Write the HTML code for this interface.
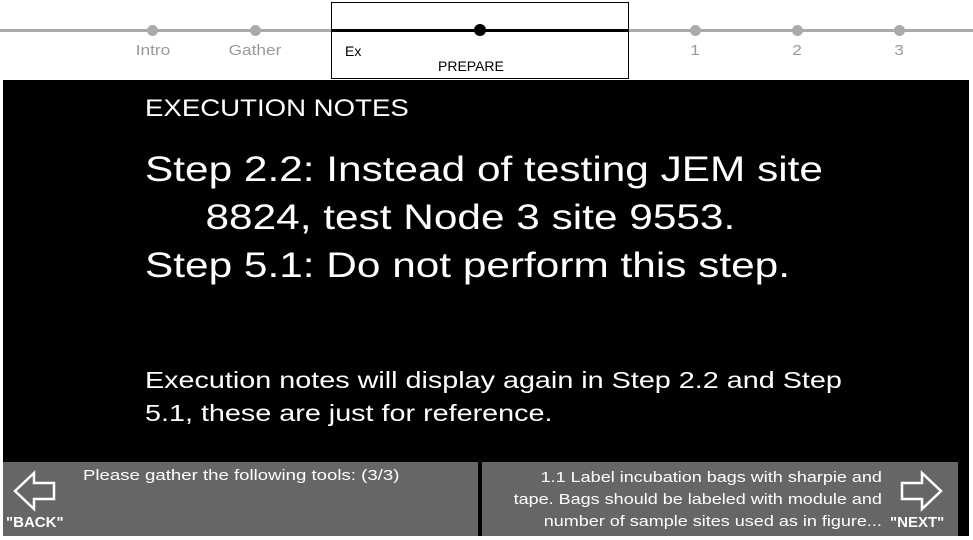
<!DOCTYPE html>
<html><head><meta charset="utf-8"><style>
body{margin:0;width:973px;height:540px;background:#fff;position:relative;overflow:hidden;font-family:"Liberation Sans",sans-serif}
.a{position:absolute}
.line{left:0;top:29px;width:973px;height:3px;background:#aaa}
.dot{width:11px;height:11px;border-radius:50%;background:#aaa;top:25px}
.lbl{color:#999;font-size:15px;top:42px;transform:translateX(-50%) scaleX(1.15)}
.main{left:3px;top:80px;width:966px;height:456px;background:#000}
.w{color:#fff;white-space:nowrap}
.s{transform-origin:0 0}
.bar{background:#666;top:462px;height:74px}
</style></head><body>
<div class="a line"></div>
<div class="a dot" style="left:147px"></div>
<div class="a dot" style="left:250px"></div>
<div class="a dot" style="left:690px"></div>
<div class="a dot" style="left:792px"></div>
<div class="a dot" style="left:894px"></div>
<div class="a lbl" style="left:153px">Intro</div>
<div class="a lbl" style="left:255px">Gather</div>
<div class="a lbl" style="left:695px">1</div>
<div class="a lbl" style="left:797px">2</div>
<div class="a lbl" style="left:899px">3</div>
<div class="a" style="left:331px;top:2px;width:296px;height:75px;border:1.5px solid #000;background:#fff"></div>
<div class="a" style="left:331px;top:29px;width:298px;height:3px;background:#000"></div>
<div class="a" style="left:474px;top:24px;width:12px;height:12px;border-radius:50%;background:#000"></div>
<div class="a" style="left:345px;top:43px;font-size:14px">Ex</div>
<div class="a" style="left:438px;top:58px;font-size:14px">PREPARE</div>
<div class="a main"></div>
<div class="a w s" style="left:145px;top:95px;font-size:24px;transform:scaleX(1.15)">EXECUTION NOTES</div>
<div class="a w s" style="left:145px;top:146px;font-size:35px;line-height:48px;transform:scaleX(1.21)">Step 2.2: Instead of testing JEM site<br><span style="padding-left:50px">8824, test Node 3 site 9553.</span><br>Step 5.1: Do not perform this step.</div>
<div class="a w s" style="left:145px;top:364px;font-size:23px;line-height:33px;transform:scaleX(1.25)">Execution notes will display again in Step 2.2 and Step<br>5.1, these are just for reference.</div>
<div class="a bar" style="left:3px;width:475px"></div>
<div class="a bar" style="left:482px;width:476px"></div>
<svg class="a" style="left:12px;top:470px" width="46" height="42"><path d="M3 21 L22 3 L22 13 L42 13 L42 29 L22 29 L22 39 Z" fill="none" stroke="#fff" stroke-width="2.5"/></svg>
<svg class="a" style="left:898px;top:470px" width="46" height="42"><path d="M43 21 L24 3 L24 13 L4 13 L4 29 L24 29 L24 39 Z" fill="none" stroke="#fff" stroke-width="2.5"/></svg>
<div class="a w" style="left:6px;top:514px;font-size:15px;font-weight:bold">"BACK"</div>
<div class="a w" style="left:890px;top:514px;font-size:15px;font-weight:bold">"NEXT"</div>
<div class="a w s" style="left:83px;top:467px;font-size:15px;transform:scaleX(1.24)">Please gather the following tools: (3/3)</div>
<div class="a w" style="right:91px;top:467px;font-size:15px;line-height:22px;text-align:right;transform:scaleX(1.2);transform-origin:100% 0">1.1 Label incubation bags with sharpie and<br>tape. Bags should be labeled with module and<br>number of sample sites used as in figure...</div>
</body></html>
